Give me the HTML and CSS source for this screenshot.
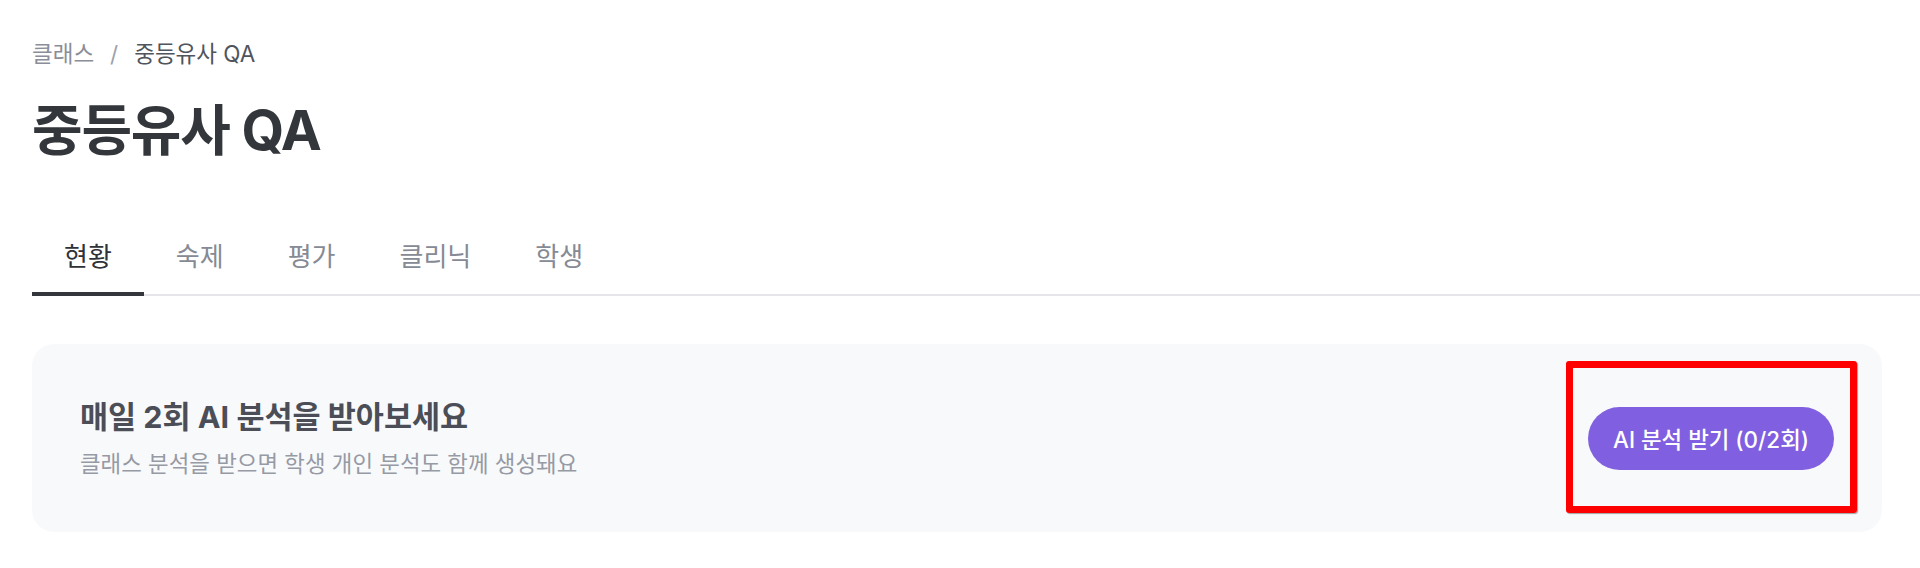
FILE: index.html
```html
<!DOCTYPE html>
<html lang="ko">
<head>
<meta charset="utf-8">
<title>중등유사 QA</title>
<link rel="stylesheet" href="styles.css">
</head>
<body>
<main class="page">
  <nav class="breadcrumb">
    <span class="crumb">클래스</span>
    <span class="sep">/</span>
    <span class="crumb current">중등유사 QA</span>
  </nav>
  <h1 class="title">중등유사 QA</h1>
  <div class="tabs">
    <div class="tab active">현황</div>
    <div class="tab">숙제</div>
    <div class="tab">평가</div>
    <div class="tab">클리닉</div>
    <div class="tab">학생</div>
  </div>
  <section class="card">
    <div class="card-text">
      <h2 class="card-title">매일 2회 AI 분석을 받아보세요</h2>
      <p class="card-sub">클래스 분석을 받으면 학생 개인 분석도 함께 생성돼요</p>
    </div>
    <button class="cta">AI 분석 받기 (0/2회)</button>
    <div class="highlight"></div>
  </section>
</main>
</body>
</html>
```

FILE: styles.css
```css
* { box-sizing: border-box; }
html, body { margin: 0; padding: 0; background: #ffffff; }
body {
  font-family: "Inter", "Noto Sans CJK KR", "Noto Sans", sans-serif;
  color: #32353a;
}
.page {
  padding: 40px 38px 0 32px;
}
.breadcrumb {
  display: flex;
  align-items: center;
  gap: 16px;
  font-size: 22.5px;
  line-height: 28px;
  color: #8a8e98;
}
.sep { color: #9ea2aa; }
.crumb.current { color: #50545c; }
.title {
  margin: 30px 0 0 0;
  font-size: 55px;
  line-height: 64px;
  font-weight: 700;
  letter-spacing: -1.2px;
  color: #33363b;
}
.tabs {
  display: flex;
  margin-top: 66px;
  margin-right: -38px;
  border-bottom: 2px solid #e5e5ea;
}
.tab {
  padding: 12px 32px 18px;
  font-size: 26px;
  line-height: 34px;
  color: #868a94;
  border-bottom: 4px solid transparent;
  margin-bottom: -2px;
}
.tab.active {
  color: #2f3237;
  border-bottom-color: #33363b;
}
.card {
  position: relative;
  margin-top: 48px;
  height: 188px;
  padding: 0 48px;
  background: #f8f9fb;
  border-radius: 22px;
  display: flex;
  align-items: center;
  justify-content: space-between;
}
.card-text { display: flex; flex-direction: column; gap: 12px; }
.card-title {
  margin: 0;
  font-size: 30.5px;
  line-height: 40px;
  font-weight: 700;
  color: #4b4e56;
}
.card-sub {
  margin: 0;
  font-size: 22.4px;
  line-height: 30px;
  color: #969aa4;
}
.cta {
  height: 63px;
  padding: 0 25px;
  border: none;
  border-radius: 999px;
  background: #8060e0;
  color: #ffffff;
  font-family: inherit;
  font-size: 22.4px;
  font-weight: 500;
}
.highlight {
  position: absolute;
  top: 17px;
  right: 25px;
  width: 291px;
  height: 152px;
  border: 7px solid #ff0000;
  border-radius: 3px;
  box-shadow: 1px 1px 1px rgba(0,0,0,0.35);
  pointer-events: none;
}
```
